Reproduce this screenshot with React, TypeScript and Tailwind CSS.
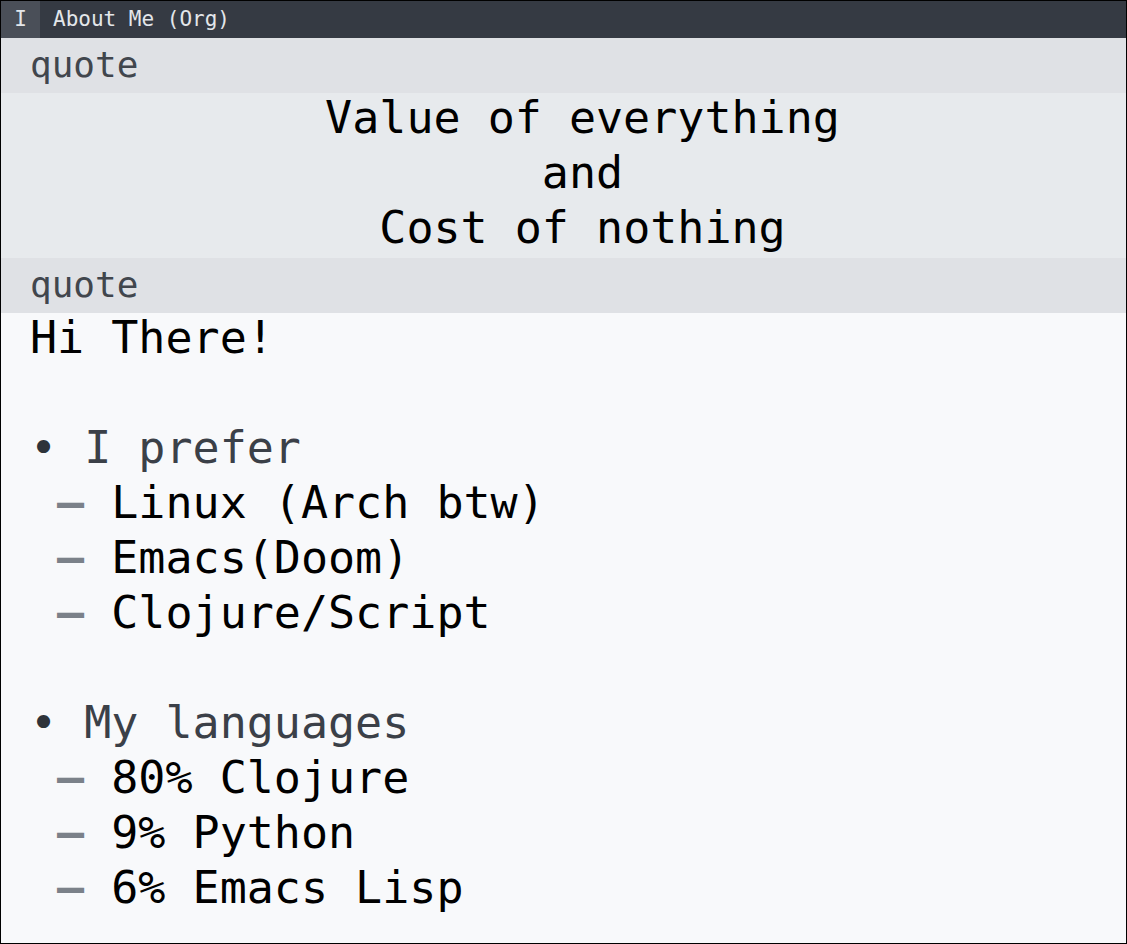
const mono = "font-['DejaVu_Sans_Mono',monospace]";

const Line = ({ children, className = "" }: { children: React.ReactNode; className?: string }) => (
  <div className={`flex h-[55px] items-center pb-[6px] whitespace-pre ${className}`}>{children}</div>
);

const Sub = ({ children }: { children: string }) => (
  <Line>
    <span>{" "}</span>
    <span className="font-bold text-[#7b8189]">–</span>
    <span>{" " + children}</span>
  </Line>
);

const Bullet = ({ children }: { children: string }) => (
  <Line className="text-[#3b4048]">
    <span className="text-[#2e333a]">•</span>
    <span>{" " + children}</span>
  </Line>
);

const App = () => {
  return (
    <div className={`w-[1127px] h-[944px] border border-black bg-[#f8f9fb] flex flex-col overflow-hidden ${mono}`}>
      <div className="flex h-[37px] items-center bg-[#353a43] text-[21px] text-[#e3e6ea] leading-none">
        <div className="flex h-full w-[39px] items-center justify-center bg-[#4a4f58]">I</div>
        <div className="pl-[13px]">About Me (Org)</div>
      </div>

      <div className="flex h-[55px] items-center pb-[2px] bg-[#dfe1e5] pl-[29px] text-[36px] text-[#41464d]">quote</div>
      <div className="bg-[#e7eaed] pl-[38px] text-[45px] text-black">
        <Line className="justify-center">Value of everything</Line>
        <Line className="justify-center">and</Line>
        <Line className="justify-center">Cost of nothing</Line>
      </div>
      <div className="flex h-[55px] items-center pb-[2px] bg-[#dfe1e5] pl-[29px] text-[36px] text-[#41464d]">quote</div>

      <div className="pl-[29px] text-[45px] text-black">
        <Line>Hi There!</Line>
        <div className="h-[55px]" />
        <Bullet>I prefer</Bullet>
        <Sub>Linux (Arch btw)</Sub>
        <Sub>Emacs(Doom)</Sub>
        <Sub>Clojure/Script</Sub>
        <div className="h-[55px]" />
        <Bullet>My languages</Bullet>
        <Sub>80% Clojure</Sub>
        <Sub>9% Python</Sub>
        <Sub>6% Emacs Lisp</Sub>
      </div>
    </div>
  );
};

export default App;
